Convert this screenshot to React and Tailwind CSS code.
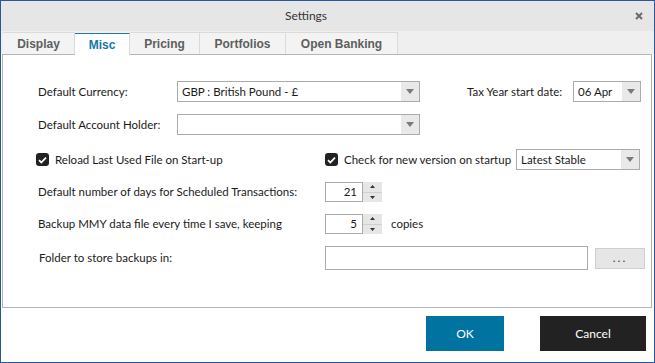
import React from "react";

const ui = { fontFamily: 'Lato, "Noto Sans", sans-serif' };
const tabFont = { fontFamily: '"Liberation Sans", Arial, sans-serif' };

const TABS = ["Display", "Misc", "Pricing", "Portfolios", "Open Banking"];
const TAB_W = ["w-[72px]", "w-[55px]", "w-[70px]", "w-[86px]", "w-[112px]"];

function Arrow() {
  return (
    <svg width="8" height="5" viewBox="0 0 8 5">
      <path d="M0 0h8L4 5z" fill="#7a7a7a" />
    </svg>
  );
}

function Select({ value, className }) {
  return (
    <div className={`flex h-full border border-[#ababab] bg-white ${className}`}>
      <div className="flex-1 px-[4px] flex items-center text-[11.5px] text-[#1a1a1a] whitespace-nowrap">{value}</div>
      <div className="w-[18px] bg-[#e9e9e9] flex items-center justify-center">
        <Arrow />
      </div>
    </div>
  );
}

function Check({ label }) {
  return (
    <div className="flex items-center gap-[6px] whitespace-nowrap">
      <div className="w-[13px] h-[13px] rounded-[3px] bg-[#222] flex items-center justify-center">
        <svg width="9" height="8" viewBox="0 0 9 8">
          <path d="M1 4.2l2.3 2.3L8 1.6" stroke="#fff" strokeWidth="1.8" fill="none" />
        </svg>
      </div>
      <span className="text-[11.5px] text-[#1a1a1a]">{label}</span>
    </div>
  );
}

function Spinner({ value }) {
  return (
    <div className="flex h-full">
      <div className="w-[38px] border border-[#ababab] flex items-center justify-end pr-[5px] text-[11.5px] text-[#1a1a1a]">
        {value}
      </div>
      <div className="w-[19px] flex flex-col bg-[#e6e6e6]">
        <div className="flex-1 flex items-center justify-center border-b border-[#cfcfcf]">
          <svg width="5" height="3" viewBox="0 0 5 3"><path d="M0 3h5L2.5 0z" fill="#333" /></svg>
        </div>
        <div className="flex-1 flex items-center justify-center">
          <svg width="5" height="3" viewBox="0 0 5 3"><path d="M0 0h5L2.5 3z" fill="#333" /></svg>
        </div>
      </div>
    </div>
  );
}

export default function App() {
  return (
    <div style={ui} className="w-[655px] h-[363px] border border-[#2b579a] bg-white flex flex-col overflow-hidden">
      {/* title bar */}
      <div className="h-[30px] bg-[#e6e6e6] flex items-center shrink-0">
        <div className="flex-1 text-center text-[12px] text-[#333] pr-[24px]">Settings</div>
        <svg className="mr-[11px]" width="8" height="8" viewBox="0 0 8 8">
          <path d="M1 1l6 6M7 1L1 7" stroke="#6b6b6b" strokeWidth="2" />
        </svg>
      </div>

      {/* tab strip */}
      <div style={tabFont} className="h-[23px] bg-[#efefef] flex items-end pl-[2px] shrink-0">
        {TABS.map((t, i) =>
          t === "Misc" ? (
            <div
              key={t}
              className={`${TAB_W[i]} h-[22px] bg-white border-t border-[#1a7aa8] border-r border-r-[#dadada] flex items-center justify-center text-[12px] font-bold text-[#1777a5] -mb-px relative z-10`}
            >
              {t}
            </div>
          ) : (
            <div
              key={t}
              className={`${TAB_W[i]} h-[22px] bg-[#f3f3f3] border-t border-r border-[#dadada] flex items-center justify-center text-[12px] font-bold text-[#5e5e5e]`}
            >
              {t}
            </div>
          )
        )}
      </div>

      {/* panel */}
      <div className="mx-[1px] mr-[2px] h-[254px] border border-[#b5b5b5] bg-white shrink-0 pl-[35px] whitespace-nowrap text-[11.5px] text-[#1a1a1a]">
        <div className="mt-[26px] h-[21px] flex items-center">
          <div className="w-[139px]">Default Currency:</div>
          <Select value="GBP : British Pound - £" className="w-[243px]" />
          <div className="ml-[47px] w-[106px]">Tax Year start date:</div>
          <Select value="06 Apr" className="w-[68px]" />
        </div>
        <div className="mt-[12px] h-[21px] flex items-center">
          <div className="w-[139px]">Default Account Holder:</div>
          <Select value="" className="w-[243px]" />
        </div>
        <div className="mt-[14px] h-[21px] flex items-center">
          <div className="w-[289px] -ml-[2px]">
            <Check label="Reload Last Used File on Start-up" />
          </div>
          <div className="w-[191px]">
            <Check label="Check for new version on startup" />
          </div>
          <Select value="Latest Stable" className="w-[124px]" />
        </div>
        <div className="mt-[12px] h-[20px] flex items-center">
          <div className="w-[287px]">Default number of days for Scheduled Transactions:</div>
          <Spinner value="21" />
        </div>
        <div className="mt-[12px] h-[20px] flex items-center">
          <div className="w-[287px]">Backup MMY data file every time I save, keeping</div>
          <Spinner value="5" />
          <span className="ml-[9px]">copies</span>
        </div>
        <div className="mt-[12px] h-[24px] flex items-center">
          <div className="w-[287px] pl-[1px]">Folder to store backups in:</div>
          <div className="w-[263px] h-[24px] border border-[#ababab]" />
          <div className="ml-[7px] w-[50px] h-[21px] bg-[#e6e6e6] border border-[#cfcfcf] flex items-center justify-center text-[12px] text-[#444] tracking-[2px]">
            ...
          </div>
        </div>
      </div>

      {/* footer */}
      <div className="flex-1 flex justify-end items-start pt-[8px] pr-[8px]">
        <button className="w-[78px] h-[35px] bg-[#0073a0] text-white text-[12px]">OK</button>
        <button className="w-[106px] h-[35px] bg-[#222] text-white text-[12px] ml-[36px]">Cancel</button>
      </div>
    </div>
  );
}
